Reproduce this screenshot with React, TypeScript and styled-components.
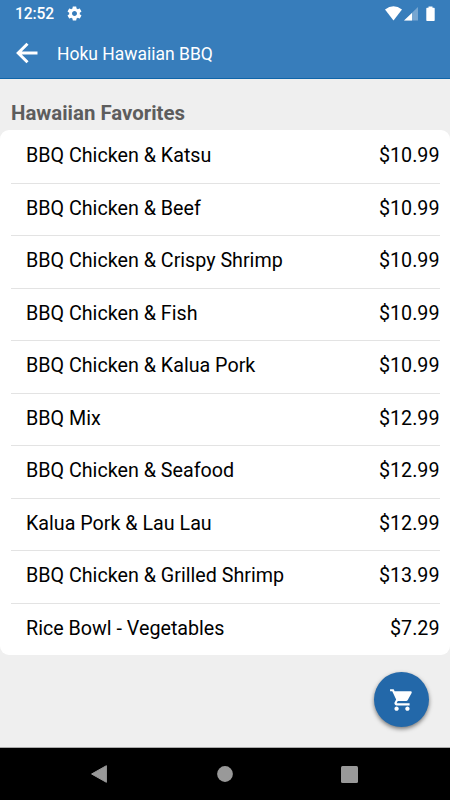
import React from "react";
import styled, { createGlobalStyle } from "styled-components";

const GlobalStyle = createGlobalStyle`
  * { box-sizing: border-box; }
  body { margin: 0; font-family: Roboto, "Liberation Sans", sans-serif; }
`;

const Screen = styled.div`
  width: 450px;
  height: 800px;
  display: flex;
  flex-direction: column;
  background: #efefef;
  overflow: hidden;
  position: relative;
`;

const Header = styled.header`
  height: 79px;
  flex: none;
  background: #377dbb;
  border-bottom: 1px solid #0f65a9;
  color: #fff;
`;

const StatusBar = styled.div`
  height: 27px;
  display: flex;
  align-items: center;
  padding: 0 14px 0 15px;
  svg { display: block; flex: none; }
`;

const Clock = styled.span`
  font-size: 15.6px;
  font-weight: 500;
  line-height: 28px;
  width: 51px;
  letter-spacing: -0.1px;
  white-space: nowrap;
`;

const StatusIcons = styled.div`
  margin-left: auto;
  display: flex;
  align-items: center;
`;

const TitleBar = styled.div`
  height: 51px;
  display: flex;
  align-items: center;
  padding-left: 13px;
`;

const BackButton = styled.button`
  border: 0;
  padding: 0;
  width: 44px;
  background: none;
  color: inherit;
  svg { display: block; }
`;

const Title = styled.h1`
  margin: 0;
  padding-top: 3px;
  font-size: 17.5px;
  font-weight: 400;
  line-height: 51px;
`;

const Content = styled.main`
  flex: 1;
`;

const SectionTitle = styled.h2`
  margin: 0;
  height: 51px;
  padding: 22px 11px 0;
  font-size: 20.4px;
  line-height: 24px;
  font-weight: 700;
  color: #5d5d5d;
`;

const Menu = styled.ul`
  margin: 0;
  padding: 0 10.5px;
  list-style: none;
  background: #fff;
  border-radius: 9px;
`;

const MenuRow = styled.li`
  height: 52.5px;
  display: flex;
  justify-content: space-between;
  padding: 0 0 0 15.5px;
  font-size: 19.7px;
  line-height: 51px;
  color: #000;
  & + & {
    border-top: 1px solid #e3e3e3;
    line-height: 49px;
  }
`;

const CartButton = styled.button`
  position: absolute;
  right: 21px;
  bottom: 73px;
  width: 55px;
  height: 55px;
  padding: 0;
  border: 0;
  border-radius: 50%;
  display: grid;
  place-items: center;
  background: #2368a9;
  color: #fff;
  box-shadow: 0 2px 4px rgba(0, 0, 0, 0.5);
`;

const NavBar = styled.nav`
  height: 53px;
  flex: none;
  background: #000;
  border-top: 1px solid #aaa;
  color: #999;
  display: flex;
  align-items: center;
  justify-content: space-between;
  padding: 0 92px 0 90px;
  svg { display: block; }
`;

const items: [string, string][] = [
  ["BBQ Chicken & Katsu", "$10.99"],
  ["BBQ Chicken & Beef", "$10.99"],
  ["BBQ Chicken & Crispy Shrimp", "$10.99"],
  ["BBQ Chicken & Fish", "$10.99"],
  ["BBQ Chicken & Kalua Pork", "$10.99"],
  ["BBQ Mix", "$12.99"],
  ["BBQ Chicken & Seafood", "$12.99"],
  ["Kalua Pork & Lau Lau", "$12.99"],
  ["BBQ Chicken & Grilled Shrimp", "$13.99"],
  ["Rice Bowl - Vegetables", "$7.29"],
];

const GearIcon = () => (
  <svg width="17" height="17" viewBox="0 0 24 24" fill="currentColor">
    <path d="M19.43 12.98c.04-.32.07-.64.07-.98s-.03-.66-.07-.98l2.11-1.65c.19-.15.24-.42.12-.64l-2-3.46c-.12-.22-.39-.3-.61-.22l-2.49 1c-.52-.4-1.08-.73-1.69-.98l-.38-2.65C14.46 2.18 14.25 2 14 2h-4c-.25 0-.46.18-.49.42l-.38 2.65c-.61.25-1.17.59-1.69.98l-2.49-1c-.23-.09-.49 0-.61.22l-2 3.46c-.13.22-.07.49.12.64l2.11 1.65c-.04.32-.07.65-.07.98s.03.66.07.98l-2.11 1.65c-.19.15-.24.42-.12.64l2 3.46c.12.22.39.3.61.22l2.49-1c.52.4 1.08.73 1.69.98l.38 2.65c.03.24.24.42.49.42h4c.25 0 .46-.18.49-.42l.38-2.65c.61-.25 1.17-.59 1.69-.98l2.49 1c.23.09.49 0 .61-.22l2-3.46c.12-.22.07-.49-.12-.64l-2.11-1.65zM12 15.5c-1.93 0-3.5-1.57-3.5-3.5s1.57-3.5 3.5-3.5 3.5 1.57 3.5 3.5-1.57 3.5-3.5 3.5z" />
  </svg>
);

const SignalIcons = () => (
  <svg width="51" height="16" viewBox="0 0 51 16" fill="#fff">
    <path d="M0 3.5Q8.500-3.200 17 3.500L8.500 14.500Z" />
    <path d="M33 1V14.500H19Z" opacity="0.32" />
    <path d="M27 7V14.500H19Z" />
    <path d="M43.500 .5h4v1.300h1.500q.7 0 .7.700v11.800q0 .7-.7.700h-7q-.7 0-.7-.7V2.500q0-.7.7-.7h1.500Z" />
  </svg>
);

const App = () => (
  <Screen>
    <GlobalStyle />
    <Header>
      <StatusBar>
        <Clock>12:52</Clock>
        <GearIcon />
        <StatusIcons>
          <SignalIcons />
        </StatusIcons>
      </StatusBar>
      <TitleBar>
        <BackButton aria-label="Back">
          <svg width="28" height="24" viewBox="0 0 28 24" fill="none" stroke="currentColor" strokeWidth="3">
            <path d="M24.500 12H6M14.500 2.700L5.200 12L14.500 21.300" />
          </svg>
        </BackButton>
        <Title>Hoku Hawaiian BBQ</Title>
      </TitleBar>
    </Header>
    <Content>
      <SectionTitle>Hawaiian Favorites</SectionTitle>
      <Menu>
        {items.map(([name, price]) => (
          <MenuRow key={name}>
            <span>{name}</span>
            <span>{price}</span>
          </MenuRow>
        ))}
      </Menu>
    </Content>
    <CartButton aria-label="Cart">
      <svg width="26" height="26" viewBox="0 0 24 24" fill="currentColor">
        <path d="M7 18c-1.100 0-1.990.9-1.990 2S5.900 22 7 22s2-.9 2-2-.9-2-2-2zM1 2v2h2l3.600 7.590-1.350 2.450c-.16.280-.25.610-.25.960 0 1.100.9 2 2 2h12v-2H7.420c-.14 0-.25-.11-.25-.25l.03-.12.900-1.630h7.450c.75 0 1.410-.41 1.750-1.030l3.580-6.490c.08-.14.120-.31.120-.48 0-.55-.45-1-1-1H5.210l-.94-2H1zm16 16c-1.100 0-1.990.9-1.990 2s.89 2 1.990 2 2-.9 2-2-.9-2-2-2z" />
      </svg>
    </CartButton>
    <NavBar>
      <svg width="18" height="20" viewBox="0 0 18 20" fill="currentColor">
        <path d="M1.600 10L16.400 1.700V18.300Z" stroke="currentColor" strokeLinejoin="round" />
      </svg>
      <svg width="16" height="16" viewBox="0 0 16 16" fill="currentColor">
        <circle cx="8" cy="8" r="7.900" />
      </svg>
      <svg width="17" height="17" viewBox="0 0 17 17" fill="currentColor">
        <rect width="17" height="17" rx="1.500" />
      </svg>
    </NavBar>
  </Screen>
);

export default App;
